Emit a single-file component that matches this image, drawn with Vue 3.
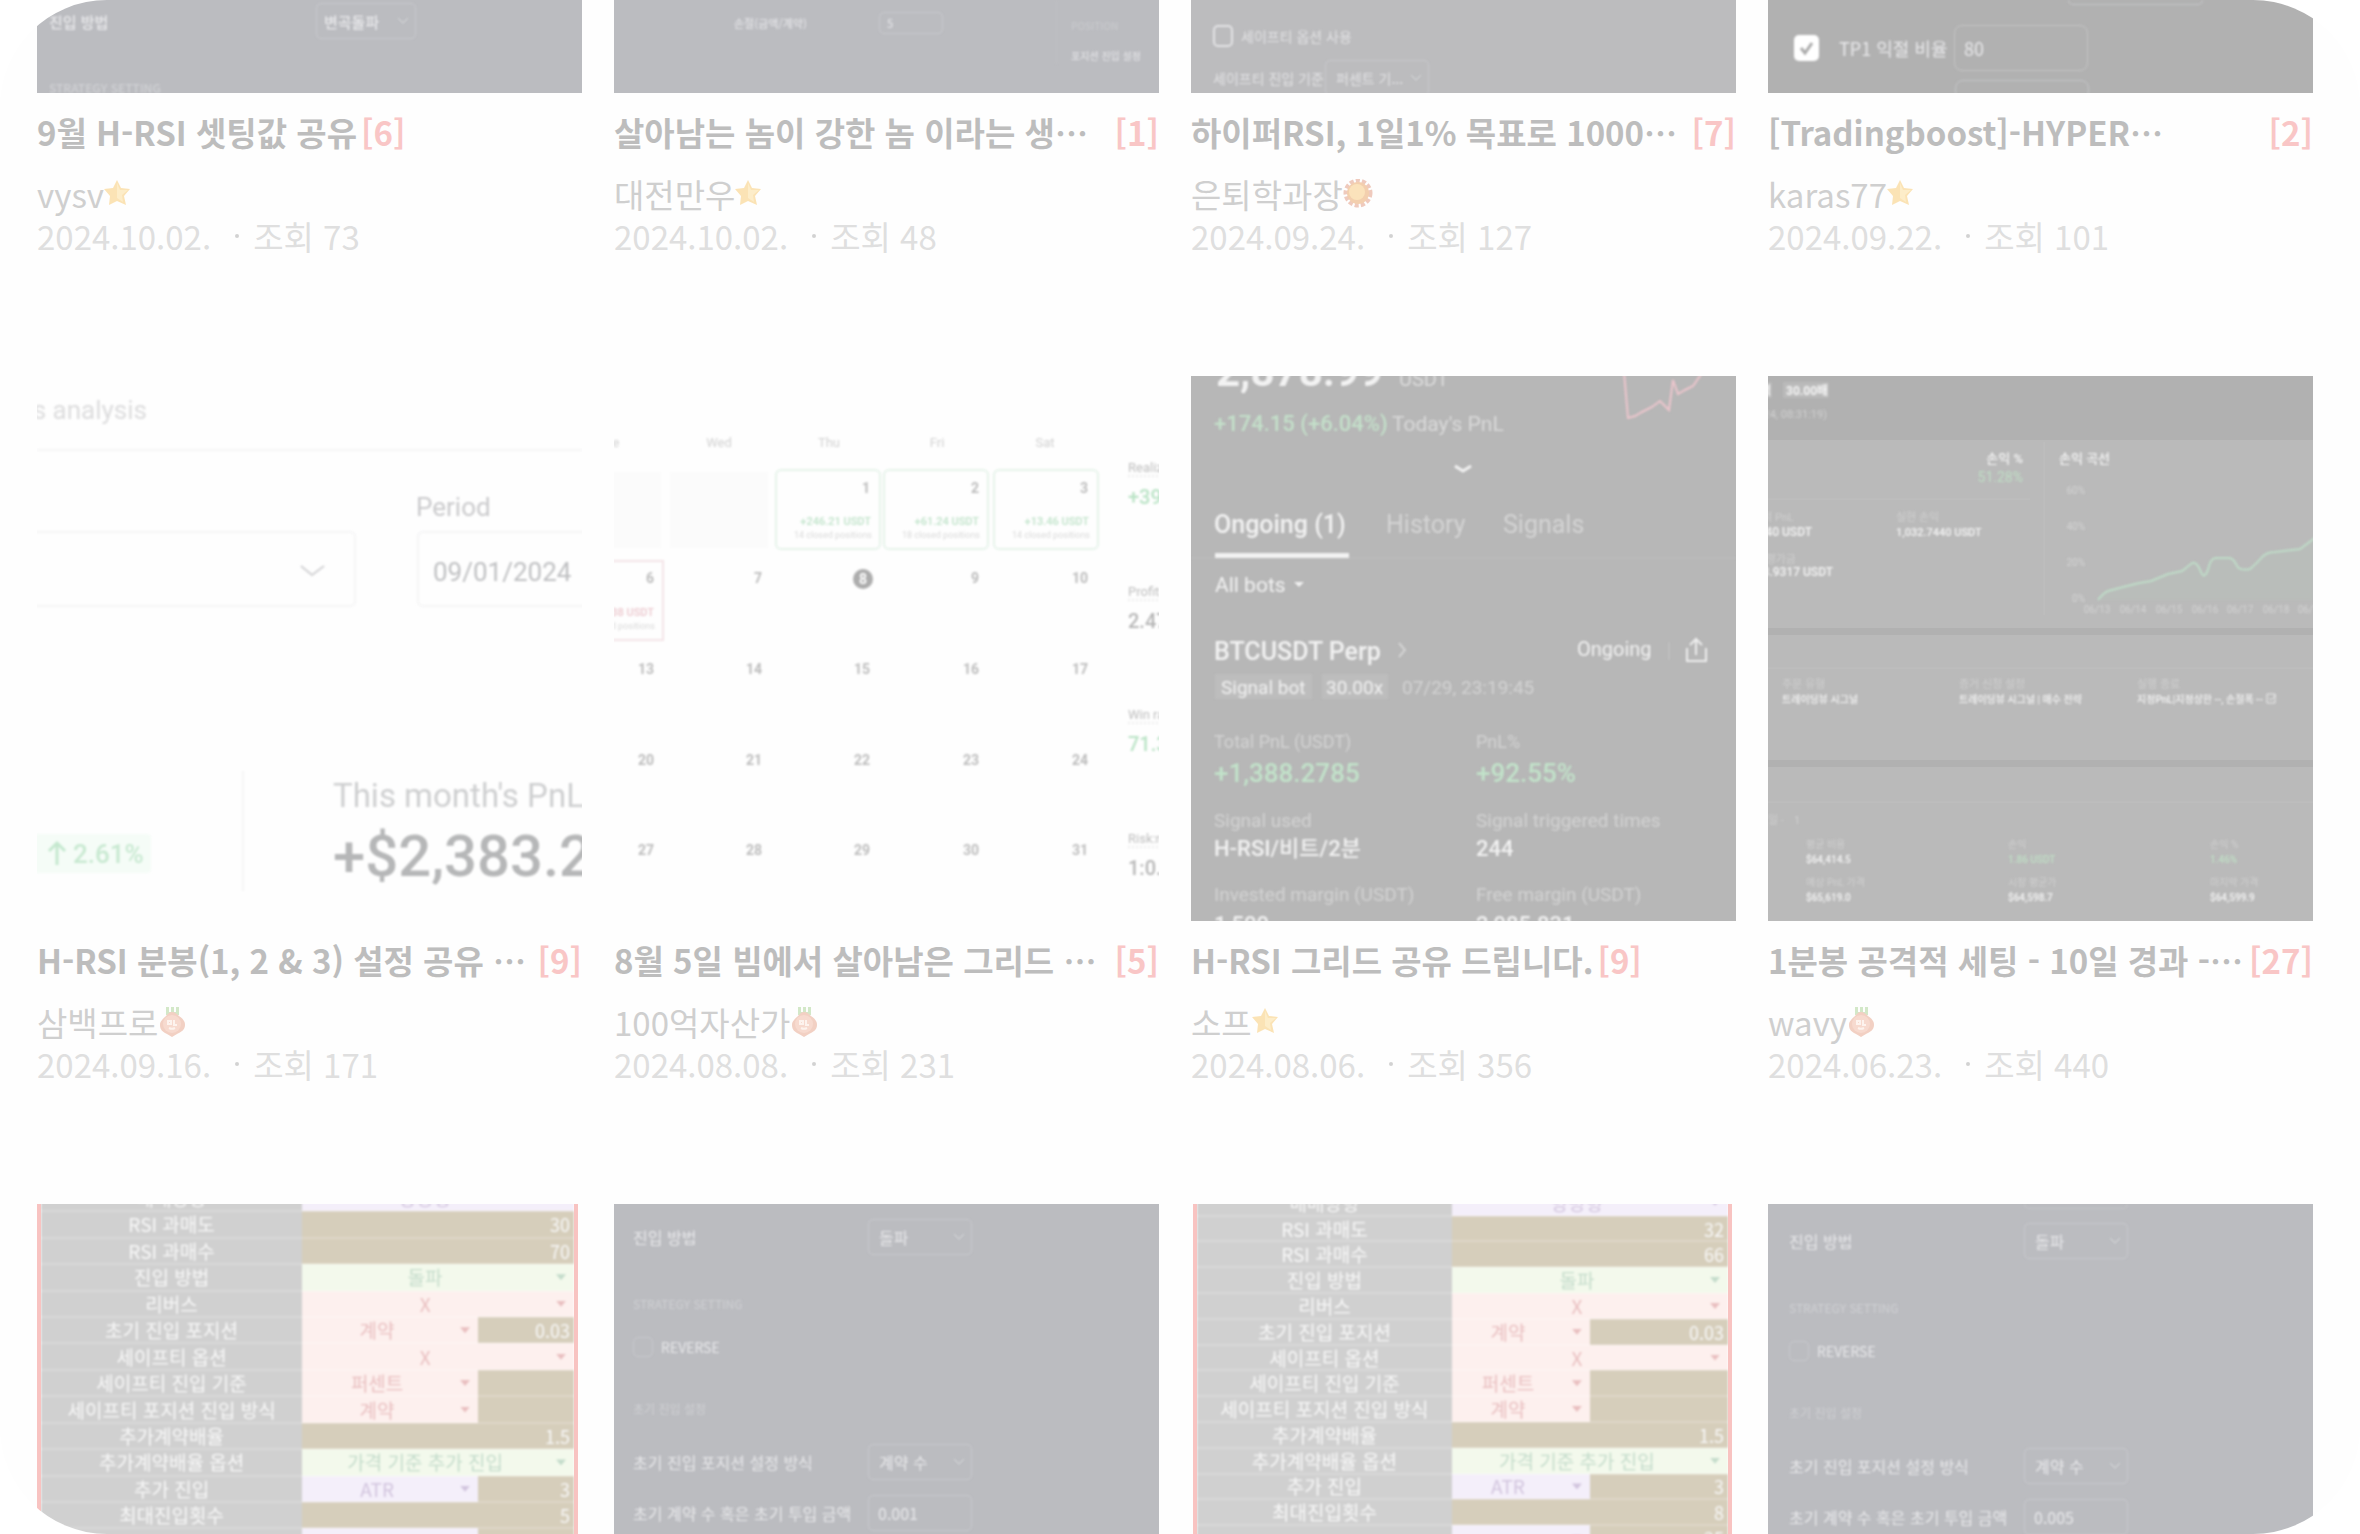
<script setup>
const posts = [
  { id: 1, shot: 'entry', size: 'tail', title: '9월 H-RSI 셋팅값 공유', count: 6, author: 'vysv', badge: 'star', date: '2024.10.02.', views: 73 },
  { id: 2, shot: 'amount', size: 'tail', title: '살아남는 놈이 강한 놈 이라는 생', cut: true, count: 1, author: '대전만우', badge: 'star', date: '2024.10.02.', views: 48 },
  { id: 3, shot: 'safety', size: 'tail', title: '하이퍼RSI, 1일1% 목표로 1000', cut: true, count: 7, author: '은퇴학과장', badge: 'sun', date: '2024.09.24.', views: 127 },
  { id: 4, shot: 'profit', size: 'tail', title: '[Tradingboost]-HYPER', cut: true, count: 2, author: 'karas77', badge: 'star', date: '2024.09.22.', views: 101 },
  { id: 5, shot: 'analysis', size: 'full', title: 'H-RSI 분봉(1, 2 & 3) 설정 공유 ', cut: true, count: 9, author: '삼백프로', badge: 'sprout', date: '2024.09.16.', views: 171 },
  { id: 6, shot: 'calendar', size: 'full', title: '8월 5일 빔에서 살아남은 그리드 ', cut: true, count: 5, author: '100억자산가', badge: 'sprout', date: '2024.08.08.', views: 231 },
  { id: 7, shot: 'bot', size: 'full', title: 'H-RSI 그리드 공유 드립니다.', count: 9, author: '소프', badge: 'star', date: '2024.08.06.', views: 356 },
  { id: 8, shot: 'dashboard', size: 'full', title: '1분봉 공격적 세팅 - 10일 경과 -', cut: true, count: 27, author: 'wavy', badge: 'sprout', date: '2024.06.23.', views: 440 },
  { id: 9, shot: 'sheet', size: 'head', sheet: { kind: 'a', low: '30', high: '70', max: '5', last: '' } },
  { id: 10, shot: 'form', size: 'head', form: { kind: 'first', amount: '0.001' } },
  { id: 11, shot: 'sheet', size: 'head', sheet: { kind: 'b', low: '32', high: '66', max: '8', last: '25' } },
  { id: 12, shot: 'form', size: 'head', form: { kind: 'second', amount: '0.005' } },
]

const sheetRows = (s) => [
  { label: '매매방향', value: '양방향', tone: 'violet' },
  { label: 'RSI 과매도', number: s.low },
  { label: 'RSI 과매수', number: s.high },
  { label: '진입 방법', value: '돌파', tone: 'green' },
  { label: '리버스', value: 'X', tone: 'rose' },
  { label: '초기 진입 포지션', value: '계약', tone: 'rose', side: '0.03' },
  { label: '세이프티 옵션', value: 'X', tone: 'rose' },
  { label: '세이프티 진입 기준', value: '퍼센트', tone: 'rose', side: '' },
  { label: '세이프티 포지션 진입 방식', value: '계약', tone: 'rose', side: '' },
  { label: '추가계약배율', number: '1.5' },
  { label: '추가계약배율 옵션', value: '가격 기준 추가 진입', tone: 'green' },
  { label: '추가 진입', value: 'ATR', tone: 'violet', side: '3' },
  { label: '최대진입횟수', number: s.max },
  { label: '', value: '', tone: 'violet', side: s.last },
]

const weekdays = [['e', 2], ['Wed', 105], ['Thu', 215], ['Fri', 323], ['Sat', 431]]
const dayColumns = [40, 148, 256, 365, 474]
const dayRows = [
  { y: 117, days: ['', '', '1', '2', '3'] },
  { y: 207, days: ['6', '7', '', '9', '10'] },
  { y: 298, days: ['13', '14', '15', '16', '17'] },
  { y: 389, days: ['20', '21', '22', '23', '24'] },
  { y: 479, days: ['27', '28', '29', '30', '31'] },
]
const gains = [
  { x: 162, sum: '+246.21 USDT', note: '14 closed positions' },
  { x: 270, sum: '+61.24 USDT', note: '18 closed positions' },
  { x: 380, sum: '+13.46 USDT', note: '14 closed positions' },
]
const summary = [
  { y: 96, name: 'Realized', value: '+39.1', tone: 'gain' },
  { y: 220, name: 'Profit', value: '2.47', tone: 'ink' },
  { y: 343, name: 'Win rate', value: '71.3', tone: 'gain' },
  { y: 467, name: 'Risk:re', value: '1:0.4', tone: 'ink' },
]
const chartLevels = [['60%', 118], ['40%', 154], ['20%', 190], ['0%', 226]]
const chartDays = [['06/13', 329], ['06/14', 365], ['06/15', 401], ['06/16', 437], ['06/17', 472], ['06/18', 508], ['06/19', 543]]
const strategy = [
  { x: 14, name: '주문 유형', value: '트레이딩뷰 시그널' },
  { x: 191, name: '증거 신청 설정', value: '트레이딩뷰 시그널 | 매수 전략' },
  { x: 369, name: '실행 종료', value: '지정PnL|지정상한 --, 손절폭 --' },
]
const positions = [
  { x: 38, y: 472, name: '평균 비용', value: '$64,414.5' },
  { x: 240, y: 472, name: '손익', value: '1.86 USDT', tone: 'gain' },
  { x: 442, y: 472, name: '손익 %', value: '1.46%', tone: 'gain' },
  { x: 38, y: 510, name: '예상 PnL 가격', value: '$65,619.0' },
  { x: 240, y: 510, name: '시장 평균가', value: '$64,598.7' },
  { x: 442, y: 510, name: '마지막 가격', value: '$64,599.9' },
]
</script>

<template>
  <main class="frame" lang="ko">
    <section class="grid">
      <article v-for="post in posts" :key="post.id" class="card">
        <div class="shot" :class="[post.size, post.shot]">
          <div v-if="post.shot === 'entry'" class="panel">
            <div class="row">
              <label for="entry-way">진입 방법</label>
              <span class="pick">
                <select id="entry-way"><option>변곡돌파</option></select>
                <svg viewBox="0 0 12 8"><path d="M1 1l5 5 5-5" /></svg>
              </span>
            </div>
            <p class="heading">STRATEGY SETTING</p>
          </div>

          <div v-else-if="post.shot === 'amount'" class="panel">
            <div class="fields">
              <label for="stop-amount">손절(금액/계약)</label>
              <input id="stop-amount" type="text" value="5" />
            </div>
            <div class="aside">
              <p class="faint">POSITION</p>
              <p>포지션 진입 설정</p>
            </div>
          </div>

          <div v-else-if="post.shot === 'safety'" class="panel">
            <div class="row">
              <input id="safety-on" type="checkbox" />
              <label for="safety-on">세이프티 옵션 사용</label>
            </div>
            <div class="row">
              <label for="safety-base">세이프티 진입 기준</label>
              <span class="pick">
                <select id="safety-base"><option>퍼센트 기...</option></select>
                <svg viewBox="0 0 12 8"><path d="M1 1l5 5 5-5" /></svg>
              </span>
            </div>
          </div>

          <div v-else-if="post.shot === 'profit'" class="panel">
            <div class="stub upper"></div>
            <div class="row">
              <span class="tick">
                <input id="tp-on" type="checkbox" checked />
                <svg viewBox="0 0 25 26"><path d="M7 13l4 5 7-10" /></svg>
              </span>
              <label for="tp-on">TP1 익절 비율</label>
              <input type="text" value="80" aria-label="TP1 익절 비율" />
            </div>
            <div class="stub lower"></div>
          </div>

          <svg v-else-if="post.shot === 'analysis'" class="art" viewBox="0 0 545 545" preserveAspectRatio="xMidYMin slice">
            <g class="soft">
              <text x="110" y="43" text-anchor="end" font-size="26" fill="#dcdcdd">s analysis</text>
              <g fill="none" stroke="#f5f5f6" stroke-width="2">
                <path d="M0 74H545" />
                <path d="M-10 156H313a5 5 0 0 1 5 5V225a5 5 0 0 1-5 5H-10" />
                <path d="M560 156H386a5 5 0 0 0-5 5V225a5 5 0 0 0 5 5H560" />
                <path d="M206 395V515" />
              </g>
              <path d="M264 190l11 9 12-9" fill="none" stroke="#d2d2d4" stroke-width="2" />
              <text x="379" y="140" font-size="26" fill="#cacacc">Period</text>
              <text x="396" y="205" font-size="26" fill="#bfc0c2">09/01/2024</text>
              <text x="296" y="431" font-size="33" fill="#cecfd0">This month's PnL</text>
              <text x="296" y="500" font-size="58" font-weight="500" fill="#b6b7b8">+$2,383.25</text>
              <rect x="-4" y="458" width="118" height="39" rx="4" fill="#f5fcf7" />
              <path d="M20 489V467M12 475l8-8 8 8" fill="none" stroke="#c5e8cf" stroke-width="3" />
              <text x="36" y="487" font-size="26" font-weight="500" fill="#c8e9d1">2.61%</text>
            </g>
          </svg>

          <svg v-else-if="post.shot === 'calendar'" class="art" viewBox="0 0 545 545" preserveAspectRatio="xMidYMin slice">
            <g class="soft">
              <text v-for="[name, x] in weekdays" :key="name" :x="x" y="71" text-anchor="middle" font-size="13" fill="#d2d2d2">{{ name }}</text>
              <path d="M-4 96H47V172H-4zM56 96H154V172H56z" fill="#fbfbfb" />
              <g v-for="gain in gains" :key="gain.x">
                <rect :x="gain.x" y="94" width="104" height="79" rx="5" fill="none" stroke="#e6f3ea" stroke-width="2" />
                <text :x="gain.x + 95" y="149" text-anchor="end" font-size="11" font-weight="500" fill="#bfe3c9">{{ gain.sum }}</text>
                <text :x="gain.x + 96" y="162" text-anchor="end" font-size="9" fill="#dadada">{{ gain.note }}</text>
              </g>
              <rect x="-10" y="185" width="59" height="79" fill="none" stroke="#f4e4e7" stroke-width="2" />
              <text x="40" y="240" text-anchor="end" font-size="11" font-weight="500" fill="#ecc8ce">-51.38 USDT</text>
              <text x="41" y="253" text-anchor="end" font-size="9" fill="#dadada">closed positions</text>
              <g v-for="line in dayRows" :key="line.y" font-size="14" font-weight="700" fill="#bcbcbc" text-anchor="end">
                <text v-for="(day, i) in line.days" :key="i" :x="dayColumns[i]" :y="line.y">{{ day }}</text>
              </g>
              <circle cx="249" cy="203" r="10" fill="#adadad" />
              <text x="249" y="208" text-anchor="middle" font-size="14" font-weight="700" fill="#fff">8</text>
              <g v-for="item in summary" :key="item.name">
                <text x="514" :y="item.y" font-size="13" fill="#bebebe">{{ item.name }}</text>
                <path :d="`M514 ${item.y + 4}H545`" stroke="#dcdcdc" stroke-dasharray="2 2" />
                <text x="514" :y="item.y + 32" font-size="20" font-weight="500" :fill="item.tone === 'gain' ? '#b9e3c5' : '#b6b6b6'">{{ item.value }}</text>
              </g>
            </g>
          </svg>

          <svg v-else-if="post.shot === 'bot'" class="art" viewBox="0 0 545 545" preserveAspectRatio="xMidYMin slice">
            <g class="soft" fill="#f2f2f2">
              <text x="25" y="10" font-size="42" font-weight="700">2,878.99</text>
              <text x="208" y="10" font-size="20" fill="#dcdcdc">USDT</text>
              <path d="M433-4l4 46 7-2 7-4 10-5 8-6 9 9 4-30 5 14 7-4 8-4 9-13" fill="none" stroke="#edc6cd" stroke-width="2" />
              <text x="23" y="55" font-size="22" font-weight="500" fill="#c4e0ca">+174.15 (+6.04%)</text>
              <text x="201" y="55" font-size="21" fill="#dadada">Today's PnL</text>
              <path d="M264 90l8 5 8-5" fill="none" stroke="#f2f2f2" stroke-width="3" />
              <text x="23" y="157" font-size="25" font-weight="500">Ongoing (1)</text>
              <text x="195" y="157" font-size="25" fill="#d4d4d4">History</text>
              <text x="312" y="157" font-size="25" fill="#d4d4d4">Signals</text>
              <path d="M0 182H545" stroke="#bebebe" />
              <path d="M24 177H158V182H24z" />
              <text x="24" y="216" font-size="21">All bots</text>
              <path d="M103 206h10l-5 5z" />
              <text x="23" y="284" font-size="25" font-weight="500">BTCUSDT Perp</text>
              <path d="M208 267l6 7-6 7" fill="none" stroke="#d4d4d4" stroke-width="2" />
              <text x="386" y="280" font-size="20">Ongoing</text>
              <path d="M478 266V284" stroke="#c8c8c8" />
              <path d="M496 272V285H515V272M505 279V264M499 269l6-6 6 6" fill="none" stroke="#eee" stroke-width="2" />
              <rect x="24" y="298" width="97" height="25" fill="#bdbdbd" />
              <rect x="131" y="298" width="66" height="25" fill="#bdbdbd" />
              <text x="30" y="318" font-size="19">Signal bot</text>
              <text x="135" y="318" font-size="19">30.00x</text>
              <g fill="#d3d3d3" font-size="19">
                <text x="211" y="318">07/29, 23:19:45</text>
                <text x="23" y="372" font-size="18">Total PnL (USDT)</text>
                <text x="285" y="372" font-size="18">PnL%</text>
                <text x="23" y="451">Signal used</text>
                <text x="285" y="451">Signal triggered times</text>
                <text x="23" y="525">Invested margin (USDT)</text>
                <text x="285" y="525">Free margin (USDT)</text>
              </g>
              <text x="23" y="406" font-size="26" font-weight="500" fill="#c2e3ca">+1,388.2785</text>
              <text x="285" y="406" font-size="26" font-weight="500" fill="#c2e3ca">+92.55%</text>
              <g font-size="22" font-weight="500">
                <text x="23" y="480">H-RSI/비트/2분</text>
                <text x="285" y="480">244</text>
                <text x="23" y="556">1,500</text>
                <text x="285" y="556">2,985.831</text>
              </g>
            </g>
          </svg>

          <svg v-else-if="post.shot === 'dashboard'" class="art" viewBox="0 0 545 545" preserveAspectRatio="xMidYMin slice">
            <path d="M0 0H545V64H0zM0 252H545V259H0zM0 384H545V391H0z" fill="#b1b1b1" />
            <path d="M0 123H262M0 292H545M0 426H545M276 66V239" stroke="#bfbfbf" fill="none" />
            <g class="soft" font-size="12" fill="#f6f6f6">
              <rect x="-8" y="6" width="12" height="16" fill="#bababa" />
              <rect x="15" y="6" width="46" height="16" fill="#bababa" />
              <text x="3" y="19" text-anchor="end" font-weight="700">격</text>
              <text x="18" y="19" font-weight="700">30.00배</text>
              <text x="255" y="87" text-anchor="end" font-size="13" font-weight="500">손익 %</text>
              <text x="255" y="106" text-anchor="end" font-size="14" fill="#c0dfc6">51.28%</text>
              <text x="291" y="87" font-size="13" font-weight="500">손익 곡선</text>
              <g font-weight="500">
                <text x="44" y="160" text-anchor="end">53.440 USDT</text>
                <text x="128" y="160" font-size="11">1,032.7440 USDT</text>
                <text x="65" y="200" text-anchor="end">1,043.9317 USDT</text>
              </g>
              <g fill="#d0d0d0" font-size="11">
                <text x="59" y="42" text-anchor="end">(2024, 08:31:19)</text>
                <text x="26" y="145" text-anchor="end">누적 PnL</text>
                <text x="128" y="145">실현 손익</text>
                <text x="28" y="187" text-anchor="end">총 평가금</text>
                <text x="0" y="448">일 -</text>
                <text x="26" y="448">1</text>
              </g>
              <g fill="#d4d4d4" font-size="10">
                <text v-for="[name, y] in chartLevels" :key="name" x="317" :y="y" text-anchor="end">{{ name }}</text>
                <text v-for="[name, x] in chartDays" :key="name" :x="x" y="237" text-anchor="middle">{{ name }}</text>
              </g>
              <path d="M330 224Q335 217 340 215L355 211 371 207 383 205 400 198 414 195 424 187Q429 185 433 196Q437 205 441 190Q443 182 448 182L462 182Q466 183 469 190Q472 195 482 193Q490 186 494 181Q499 176 507 176L532 173 545 163V224z" fill="#b9bdba" />
              <path d="M330 224Q335 217 340 215L355 211 371 207 383 205 400 198 414 195 424 187Q429 185 433 196Q437 205 441 190Q443 182 448 182L462 182Q466 183 469 190Q472 195 482 193Q490 186 494 181Q499 176 507 176L532 173 548 161" fill="none" stroke="#bfdcc8" stroke-width="2" />
              <g v-for="item in strategy" :key="item.x">
                <text :x="item.x" y="312" font-size="11" fill="#d0d0d0">{{ item.name }}</text>
                <text :x="item.x" y="327" font-size="10" font-weight="500">{{ item.value }}</text>
              </g>
              <path d="M499 318h8v9h-8zM501 322l2 2 5-5" fill="none" stroke="#eee" />
              <g v-for="item in positions" :key="item.name">
                <text :x="item.x" :y="item.y" font-size="10" fill="#d0d0d0">{{ item.name }}</text>
                <text :x="item.x" :y="item.y + 15" font-size="10" font-weight="500" :fill="item.tone === 'gain' ? '#c0dfc6' : '#f6f6f6'">{{ item.value }}</text>
              </g>
            </g>
          </svg>

          <div v-else-if="post.shot === 'sheet'" class="page" :class="post.sheet.kind">
            <table>
              <colgroup><col class="label" /><col class="main" /><col class="side" /></colgroup>
              <tbody>
                <tr v-for="(row, i) in sheetRows(post.sheet)" :key="i">
                  <th scope="row">{{ row.label }}</th>
                  <td v-if="row.number" colspan="2" class="tan">{{ row.number }}</td>
                  <template v-else>
                    <td :colspan="row.side === undefined ? 2 : 1" :class="row.tone">
                      <span class="choice">{{ row.value }}</span>
                    </td>
                    <td v-if="row.side !== undefined" class="tan">{{ row.side }}</td>
                  </template>
                </tr>
              </tbody>
            </table>
          </div>

          <div v-else class="panel" :class="post.form.kind">
            <div v-if="post.form.kind === 'second'" class="stub"></div>
            <div class="row">
              <label :for="`way-${post.id}`">진입 방법</label>
              <span class="pick">
                <select :id="`way-${post.id}`"><option>돌파</option></select>
                <svg viewBox="0 0 12 8"><path d="M1 1l5 5 5-5" /></svg>
              </span>
            </div>
            <p class="heading">STRATEGY SETTING</p>
            <div class="check">
              <input :id="`reverse-${post.id}`" type="checkbox" />
              <label :for="`reverse-${post.id}`">REVERSE</label>
            </div>
            <p class="heading">초기 진입 설정</p>
            <div class="row">
              <label :for="`unit-${post.id}`">초기 진입 포지션 설정 방식</label>
              <span class="pick">
                <select :id="`unit-${post.id}`"><option>계약 수</option></select>
                <svg viewBox="0 0 12 8"><path d="M1 1l5 5 5-5" /></svg>
              </span>
            </div>
            <div class="row">
              <label :for="`amount-${post.id}`">초기 계약 수 혹은 초기 투입 금액</label>
              <input :id="`amount-${post.id}`" type="text" :value="post.form.amount" />
            </div>
          </div>
        </div>

        <div v-if="post.title" class="info">
          <h2 class="title" :class="{ cut: post.cut }">
            <a href="#" class="name">{{ post.title }}<span v-if="post.cut" class="dots">⋯</span></a>
            <a href="#" class="count">[{{ post.count }}]</a>
          </h2>
          <a href="#" class="author">
            {{ post.author }}
            <svg v-if="post.badge === 'star'" viewBox="0 0 30 30" class="badge">
              <path d="M13 1l4 8 9 1-6 7 2 9-9-4-8 4 1-9-6-7 9-1z" fill="#fbe3b5" />
              <path d="M13 4l3 7 8 0-6 5 1 7-6-4z" fill="#fdedc9" />
            </svg>
            <svg v-else-if="post.badge === 'sun'" viewBox="0 0 30 30" class="badge">
              <circle cx="15" cy="14" r="12" fill="none" stroke="#efcabd" stroke-width="5" stroke-dasharray="4 2" />
              <circle cx="15" cy="14" r="11" fill="#f3cfae" />
              <circle cx="14" cy="13" r="8" fill="#fbe2bb" />
            </svg>
            <svg v-else viewBox="0 0 30 30" class="badge">
              <path d="M8 0h3v5h2v-5h3v5h2v-5h3v8h-13z" fill="#d3e8c8" />
              <path d="M14 5c3 0 5 2 7 4 4 3 6 5 6 9 0 5-4 7-8 9l-5 3-5-3c-4-2-7-4-7-9 0-4 3-6 6-9 2-2 3-4 6-4z" fill="#f2d0c3" />
              <circle cx="14" cy="17" r="9" fill="#f7dacf" />
              <path d="M10 14h3v3h-3zM16 13v5h3M11 21c2 1 4 1 6 0" fill="none" stroke="#fdf3ee" stroke-width="2" />
            </svg>
          </a>
          <p class="meta"><time>{{ post.date }}</time><i></i>조회 {{ post.views }}</p>
        </div>
      </article>
    </section>
  </main>
</template>

<style>
body {
  background: #fff;
}
</style>

<style scoped>
.frame {
  min-height: 100vh;
  box-sizing: border-box;
  overflow: hidden;
  border-radius: 107px;
  padding: 0 47px 0 37px;
  background: #fefefe;
  font-family: "Noto Sans CJK KR", "Noto Sans", sans-serif;
}
.grid {
  display: grid;
  grid-template-columns: repeat(4, minmax(0, 1fr));
  gap: 119px 32px;
}
p,
h2 {
  margin: 0;
}
a {
  color: inherit;
  text-decoration: none;
}
.shot {
  overflow: hidden;
  background: #bbbcc0;
  color: #e9e9eb;
}
.tail {
  height: 93px;
}
.full {
  aspect-ratio: 1;
}
.head {
  height: 330px;
}
.safety {
  background: #bcbcbe;
}
.profit {
  background: #b1b1b1;
}
.analysis,
.calendar {
  background: #fefefe;
}
.bot {
  background: #b7b7b7;
}
.dashboard {
  background: #bababa;
}
.art {
  display: block;
  width: 100%;
  height: 100%;
  font-family: Roboto, "Noto Sans CJK KR", sans-serif;
}
.soft,
.panel,
.page table {
  filter: blur(1px);
}

/* captions */
.info {
  padding-top: 18px;
  color: #cfcfcf;
  font-size: 33px;
  line-height: 42px;
}
.title {
  display: flex;
  gap: 4px;
  margin-bottom: 20px;
  color: #bdbdbd;
  font-size: 33px;
  font-weight: 700;
  white-space: pre;
}
.title.cut {
  justify-content: space-between;
}
.title .name {
  min-width: 0;
}
.dots {
  display: inline-block;
  font-family: "Noto Sans CJK JP", sans-serif;
}
.count {
  color: #f9c6c6;
}
.author {
  display: flex;
  align-items: center;
}
.badge {
  width: 30px;
  height: 30px;
}
.meta {
  display: flex;
  align-items: center;
  color: #dfdfdf;
}
.meta i {
  width: 4px;
  height: 4px;
  margin: 0 14px 0 24px;
  border-radius: 50%;
  background: #d2d2d2;
}

/* setting panels */
.panel {
  display: flex;
  flex-direction: column;
  font-size: 16px;
  font-weight: 400;
  white-space: nowrap;
}
.panel input,
.panel select {
  box-sizing: border-box;
  margin: 0;
  appearance: none;
  border: 1px solid #c9cace;
  border-radius: 5px;
  background: transparent;
  color: inherit;
  font: inherit;
}
.panel .row {
  display: flex;
  align-items: center;
  height: 36px;
}
.panel .pick {
  display: flex;
  align-items: center;
  width: 104px;
  height: 36px;
}
.pick select {
  flex: 1;
  min-width: 0;
  height: 100%;
  padding: 0 10px;
}
.pick svg {
  flex: none;
  width: 12px;
  height: 8px;
  margin: 0 7px 0 -19px;
  pointer-events: none;
}
.pick path {
  fill: none;
  stroke: #dedfe1;
  stroke-width: 1;
}
.heading {
  height: 18px;
  margin-top: 42px;
  color: #d0d1d4;
  font-size: 12px;
  line-height: 18px;
}
.entry .panel {
  padding: 3px 0 0 12px;
  font-size: 15px;
  font-weight: 500;
}
.entry label {
  width: 267px;
}
.entry .pick {
  width: 100px;
}
.entry select {
  padding: 0 7px;
}
.entry .heading {
  margin-top: 40px;
}
.amount .panel {
  flex-direction: row;
  justify-content: space-between;
  padding: 0 18px 0 120px;
  color: #e2e2e5;
  font-size: 11px;
  font-weight: 500;
}
.amount .fields {
  display: flex;
  align-items: center;
  height: 22px;
  padding-top: 12px;
}
.amount label {
  width: 145px;
}
.amount input {
  width: 64px;
  height: 22px;
  padding: 0 7px;
}
.amount .aside {
  padding: 18px 0 0 14px;
  border-left: 1px solid #bfc0c4;
  font-size: 10px;
  line-height: 16px;
}
.amount .faint {
  margin-bottom: 14px;
  color: #c8c9cc;
}
.safety .panel {
  gap: 6px;
  padding: 18px 0 0 22px;
  font-size: 14px;
  color: #e2e2e4;
}
.safety input {
  width: 20px;
  height: 22px;
  margin-right: 8px;
  border: 2px solid #e4e4e6;
}
.safety label {
  flex: none;
}
.safety .row + .row label {
  width: 112px;
}
.safety .pick {
  width: 104px;
}
.profit .panel {
  gap: 9px;
  height: 93px;
  font-size: 18px;
}
.profit .row {
  height: 46px;
  padding: 11px 0 0 26px;
}
.tick {
  display: flex;
  margin-right: 20px;
}
.profit .tick input {
  width: 25px;
  height: 26px;
  border: 0;
  background: #fff;
}
.tick svg {
  width: 25px;
  height: 26px;
  margin-left: -25px;
  fill: none;
  stroke: #ababab;
  stroke-width: 3;
  pointer-events: none;
}
.profit label {
  width: 115px;
}
.profit input[type="text"] {
  width: 134px;
  height: 46px;
  padding: 0 9px;
  border-color: #c6c6c6;
  border-radius: 8px;
}
.stub {
  flex: none;
  box-sizing: border-box;
  border: 1px solid #c6c7ca;
}
.profit .upper {
  width: 135px;
  height: 5px;
  margin-left: 300px;
  border-top: 0;
  border-radius: 0 0 8px 8px;
}
.profit .lower {
  width: 134px;
  height: 20px;
  margin-left: 187px;
  border-radius: 8px;
}
.first {
  padding: 15px 0 0 19px;
}
.second {
  padding: 0 0 0 21px;
}
.second .stub {
  width: 104px;
  height: 5px;
  margin: 0 0 14px 235px;
  border-top: 0;
  border-radius: 0 0 5px 5px;
}
.form .row label {
  width: 235px;
}
.form .row input {
  width: 104px;
  height: 36px;
  padding: 0 9px;
}
.form .check {
  display: flex;
  align-items: center;
  gap: 8px;
  height: 20px;
  margin-top: 24px;
  font-size: 14px;
}
.form .check input {
  width: 20px;
  height: 20px;
}
.form .heading {
  margin-top: 40px;
}
.form .check + .heading {
  margin-top: 43px;
}
.form .heading + .row {
  margin-top: 26px;
}
.form .row + .row {
  margin-top: 15px;
}

/* spreadsheets */
.sheet {
  background: #fefefe;
}
.page {
  box-sizing: border-box;
  height: 100%;
  margin-right: 4px;
  overflow: hidden;
  border: solid #f8c3c1;
  border-width: 0 4px;
}
.page.b {
  margin-left: 2px;
}
.page table {
  width: 100%;
  height: 370px;
  margin-top: -18px;
  border-collapse: collapse;
  table-layout: fixed;
  color: #f8f8f8;
  font-size: 19px;
  line-height: 20px;
}
.page.b table {
  height: 361px;
  margin-top: -13px;
}
.label {
  width: 49%;
}
.b .label {
  width: 48%;
}
.main {
  width: 33%;
}
.b .main {
  width: 26%;
}
.page th,
.page td {
  padding: 0 4px;
  border-bottom: 2px solid rgba(255, 255, 255, 0.2);
  font-weight: 400;
}
.page th {
  background: #d0d0d0;
}
.page .tan {
  background: #d6cebb;
  font-size: 18px;
  text-align: right;
}
.choice {
  display: flex;
  align-items: center;
  justify-content: center;
  min-height: 20px;
}
.choice::before {
  flex: 1;
  content: "";
}
.choice::after {
  flex: 1 1 22px;
  height: 6px;
  margin-right: 4px;
  background: currentColor;
  clip-path: polygon(calc(100% - 10px) 0, 100% 0, calc(100% - 5px) 100%);
  content: "";
}
.green {
  background: #f3f9ec;
  color: #c4dccb;
}
.rose {
  background: #fdf0ee;
  color: #e9bfc0;
}
.violet {
  background: #f4effa;
  color: #d2c5de;
}
</style>
